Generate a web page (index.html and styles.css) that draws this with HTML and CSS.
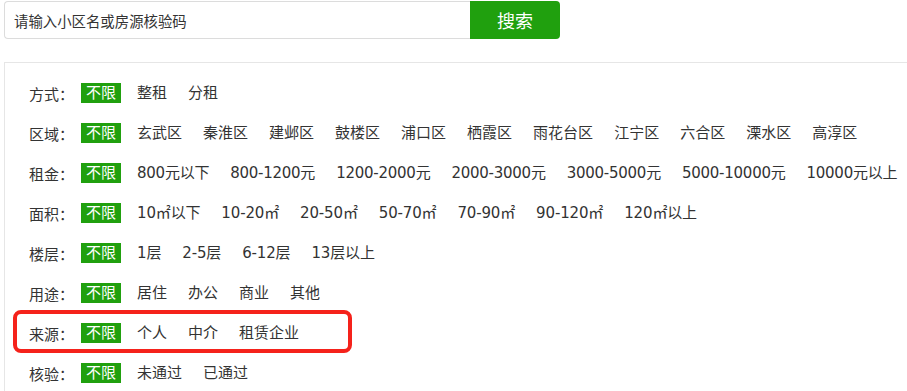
FILE: index.html
```html
<!DOCTYPE html>
<html>
<head>
	<meta charset="utf-8">
	<title>租房筛选</title>
	<link rel="stylesheet" href="styles.css">
</head>
<body>
	<div id="page">
		<form class="search">
			<input class="search-input" type="text" placeholder="请输入小区名或房源核验码">
			<div class="search-btn">搜索</div>
		</form>

		<div class="filter">
			<div class="row">
				<span class="label">方式：</span>
				<a class="opt on">不限</a><a class="opt">整租</a><a class="opt">分租</a>
			</div>
			<div class="row">
				<span class="label">区域：</span>
				<a class="opt on">不限</a><a class="opt">玄武区</a><a class="opt">秦淮区</a><a class="opt">建邺区</a><a class="opt">鼓楼区</a><a class="opt">浦口区</a><a class="opt">栖霞区</a><a class="opt">雨花台区</a><a class="opt">江宁区</a><a class="opt">六合区</a><a class="opt">溧水区</a><a class="opt">高淳区</a>
			</div>
			<div class="row price">
				<span class="label">租金：</span>
				<a class="opt on">不限</a><a class="opt">800元以下</a><a class="opt">800-1200元</a><a class="opt">1200-2000元</a><a class="opt">2000-3000元</a><a class="opt">3000-5000元</a><a class="opt">5000-10000元</a><a class="opt">10000元以上</a>
			</div>
			<div class="row area">
				<span class="label">面积：</span>
				<a class="opt on">不限</a><a class="opt">10㎡以下</a><a class="opt">10-20㎡</a><a class="opt">20-50㎡</a><a class="opt">50-70㎡</a><a class="opt">70-90㎡</a><a class="opt">90-120㎡</a><a class="opt">120㎡以上</a>
			</div>
			<div class="row area">
				<span class="label">楼层：</span>
				<a class="opt on">不限</a><a class="opt">1层</a><a class="opt">2-5层</a><a class="opt">6-12层</a><a class="opt">13层以上</a>
			</div>
			<div class="row">
				<span class="label">用途：</span>
				<a class="opt on">不限</a><a class="opt">居住</a><a class="opt">办公</a><a class="opt">商业</a><a class="opt">其他</a>
			</div>
			<div class="row">
				<span class="label">来源：</span>
				<a class="opt on">不限</a><a class="opt">个人</a><a class="opt">中介</a><a class="opt">租赁企业</a>
			</div>
			<div class="row">
				<span class="label">核验：</span>
				<a class="opt on">不限</a><a class="opt">未通过</a><a class="opt">已通过</a>
			</div>
		</div>

		<div class="mark"></div>
	</div>
</body>
</html>
```

FILE: styles.css
```css
html, body {
	margin: 0;
	background: #fff;
	font-family: 'Noto Sans CJK SC', 'Noto Sans', sans-serif;
	color: #333;
	overflow: hidden;
}

#page {
	position: relative;
	padding: 1px 0 0 4px;
}

.search {
	display: flex;
	width: 556px;
	height: 38px;
	margin: 0;
}

.search-input {
	flex: 1;
	box-sizing: border-box;
	height: 38px;
	padding: 0 9px;
	border: 1px solid #dcdcdc;
	border-right: none;
	border-radius: 4px 0 0 4px;
	font-family: inherit;
	font-size: 14.4px;
	color: #333;
	outline: none;
}
.search-input::placeholder {
	color: #333;
}

.search-btn {
	width: 90px;
	height: 38px;
	line-height: 38px;
	text-align: center;
	background-color: #20a00e;
	border-radius: 0 4px 4px 0;
	color: #fff;
	font-size: 18px;
	cursor: pointer;
}

.filter {
	margin-top: 23px;
	padding: 10px 0 0 24px;
	border-top: 1px solid #e6e6e6;
	border-left: 1px solid #e6e6e6;
	font-family: 'DejaVu Sans', 'Noto Sans CJK SC', sans-serif;
	font-size: 15px;
}

.row {
	display: flex;
	align-items: center;
	height: 40px;
	white-space: nowrap;
}
/* digit-heavy rows run a touch narrow */
.row.price .opt {
	letter-spacing: -0.25px;
}
.row.area .opt {
	letter-spacing: -0.15px;
}

.label {
	flex-shrink: 0;
	width: 52px;
}

.opt {
	flex-shrink: 0;
	display: inline-block;
	height: 20px;
	line-height: 20px;
	padding: 0 5px;
	margin-right: 11px;
	color: #333;
	cursor: pointer;
}
.row .opt.on {
	background-color: #20a00e;
	color: #fff;
	letter-spacing: 0;
}

.mark {
	position: absolute;
	left: 13px;
	top: 310px;
	width: 331px;
	height: 35px;
	border: 4px solid #f5221b;
	border-radius: 8px;
	pointer-events: none;
}
```
